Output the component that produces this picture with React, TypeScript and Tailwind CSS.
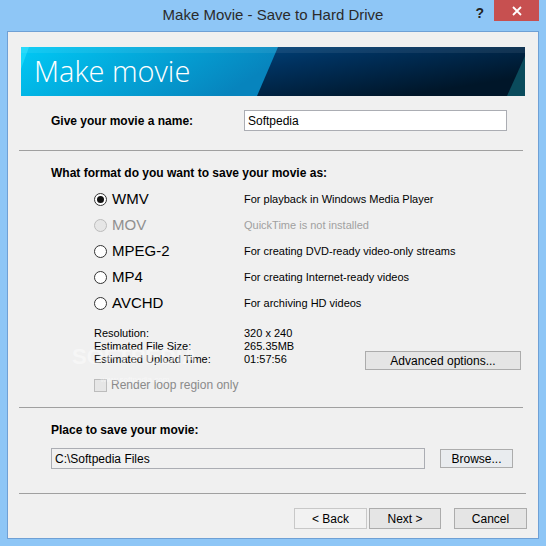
import clsx from "clsx";

const formats = [
  { name: "WMV", desc: "For playback in Windows Media Player", checked: true },
  { name: "MOV", desc: "QuickTime is not installed", disabled: true },
  { name: "MPEG-2", desc: "For creating DVD-ready video-only streams" },
  { name: "MP4", desc: "For creating Internet-ready videos" },
  { name: "AVCHD", desc: "For archiving HD videos" },
];

const info = [
  ["Resolution:", "320 x 240"],
  ["Estimated File Size:", "265.35MB"],
  ["Estimated Upload Time:", "01:57:56"],
];

function Radio({ checked, disabled }: { checked?: boolean; disabled?: boolean }) {
  return (
    <span
      className={clsx(
        "flex h-[13px] w-[13px] shrink-0 items-center justify-center rounded-full border",
        disabled ? "border-[#bcbcbc] bg-[#e6e6e6]" : "border-[#333333] bg-white"
      )}
    >
      {checked && <span className="h-[7px] w-[7px] rounded-full bg-[#111]" />}
    </span>
  );
}

function Button({ children, className }: { children: React.ReactNode; className?: string }) {
  return (
    <div
      className={clsx(
        "flex items-center justify-center border border-[#acacac] bg-[#e5e5e5] text-[12px] text-black",
        className
      )}
    >
      {children}
    </div>
  );
}

function Separator({ className }: { className?: string }) {
  return <div className={clsx("ml-[11px] h-px bg-[#a0a0a0]", className)} />;
}

function Banner() {
  return (
    <div className="ml-[13px] mt-[15px] grid h-[49px] w-[504px]">
      <svg className="[grid-area:1/1]" width="504" height="49" viewBox="0 0 504 49">
        <defs>
          <linearGradient id="lft" x1="0" y1="0" x2="1" y2="0.3">
            <stop offset="0" stopColor="#00c9f5" />
            <stop offset="1" stopColor="#0784bd" />
          </linearGradient>
          <linearGradient id="rgt" x1="0" y1="0" x2="1" y2="0.6">
            <stop offset="0" stopColor="#005ca2" />
            <stop offset="0.55" stopColor="#00315e" />
            <stop offset="1" stopColor="#001629" />
          </linearGradient>
        </defs>
        <rect width="504" height="49" fill="url(#rgt)" />
        <polygon points="0,0 257,0 236,49 0,49" fill="url(#lft)" />
        <polygon points="0,0 8,0 0,22" fill="#29e3ff" opacity="0.6" />
        <polygon points="504,9 504,49 486,49" fill="#0a4b5c" />
        <rect width="504" height="6" fill="#ffffff" opacity="0.07" />
      </svg>
      <div className="z-10 flex items-center pl-[13px] pb-[2px] font-['Open_Sans',sans-serif] text-[29px] font-light leading-none text-white [grid-area:1/1]">
        Make movie
      </div>
    </div>
  );
}

export default function App() {
  return (
    <div className="flex h-[546px] w-[546px] flex-col bg-[#8ec6f6] font-['Liberation_Sans',Arial,sans-serif]">
      <div className="grid h-[31px] grid-cols-[1fr_auto_1fr]">
        <div />
        <div className="flex items-center pb-[1px] text-[15px] text-[#2b2b2b]">Make Movie - Save to Hard Drive</div>
        <div className="flex items-start justify-end pr-[7px]">
          <span className="mr-[10px] mt-[3px] text-[14px] font-bold text-[#222]">?</span>
          <div className="flex h-[21px] w-[45px] items-center justify-center bg-[#c75050]">
            <svg width="10" height="10" viewBox="0 0 10 10">
              <path d="M1 1 L9 9 M9 1 L1 9" stroke="white" strokeWidth="1.8" />
            </svg>
          </div>
        </div>
      </div>

      <div className="relative mx-[7px] mb-[7px] flex flex-1 flex-col border border-[#6fa0d5] bg-[#f0f0f0] text-[11px] text-black">
        <Banner />

        <div className="mt-[14px] flex h-[21px] items-center pl-[43px]">
          <div className="w-[193px] text-[12px] font-bold">Give your movie a name:</div>
          <div className="flex h-[21px] w-[263px] items-center border border-[#abadb3] bg-white pl-[3px] text-[12px]">
            Softpedia
          </div>
        </div>

        <Separator className="mt-[19px] w-[504px]" />

        <div className="mt-[14px] h-[16px] pl-[43px] text-[12px] font-bold leading-[16px]">
          What format do you want to save your movie as:
        </div>

        <div className="mt-[5px] flex flex-col pl-[86px]">
          {formats.map((f) => (
            <div key={f.name} className="flex h-[26px] items-center">
              <div className="flex w-[150px] items-center gap-[5px]">
                <Radio checked={f.checked} disabled={f.disabled} />
                <span className={clsx("text-[15px]", f.disabled ? "text-[#8f8f8f]" : "text-black")}>{f.name}</span>
              </div>
              <span className={clsx("text-[11px]", f.disabled ? "text-[#a0a0a0]" : "text-black")}>{f.desc}</span>
            </div>
          ))}
        </div>

        <div className="mt-[11px] flex items-start">
          <div className="flex w-[357px] flex-col pl-[86px]">
            {info.map(([k, v]) => (
              <div key={k} className="flex h-[13px] items-center leading-[13px]">
                <span className="w-[150px]">{k}</span>
                <span>{v}</span>
              </div>
            ))}
          </div>
          <Button className="mt-[24px] h-[19px] w-[156px]">Advanced options...</Button>
        </div>

        <div className="mt-[7px] flex h-[16px] items-center gap-[4px] pl-[86px]">
          <span className="h-[13px] w-[13px] border border-[#bcbcbc] bg-[#e6e6e6]" />
          <span className="text-[12px] text-[#8a8a8a]">Render loop region only</span>
        </div>

        <Separator className="mt-[14px] w-[504px]" />

        <div className="mt-[14px] h-[16px] pl-[43px] text-[12px] font-bold leading-[16px]">
          Place to save your movie:
        </div>

        <div className="mt-[10px] flex h-[21px] items-center pl-[43px]">
          <div className="flex h-[21px] w-[374px] items-center border border-[#abadb3] bg-[#f0f0f0] pl-[3px] text-[12px]">
            C:\Softpedia Files
          </div>
          <Button className="ml-[15px] h-[19px] w-[73px] border-[#3d9bf5] bg-[#e9ecef]">Browse...</Button>
        </div>

        <Separator className="mt-[24px] w-[507px]" />

        <div className="mt-[14px] flex justify-end pr-[11px]">
          <Button className="h-[21px] w-[73px] border-[#c8c8c8] bg-[#f2f2f2] text-[#a8a8a8]">&lt; Back</Button>
          <Button className="ml-[2px] h-[21px] w-[72px]">Next &gt;</Button>
          <Button className="ml-[13px] h-[21px] w-[73px]">Cancel</Button>
        </div>

        {/* faint site watermark over the dialog */}
        <div className="pointer-events-none absolute left-[64px] top-[314px] flex flex-col items-center leading-none">
          <span className="text-[22px] font-bold text-white opacity-45">SOFTPEDIA</span>
          <span className="mt-[8px] text-[8px] text-white opacity-50">www.softpedia.com</span>
        </div>
      </div>
    </div>
  );
}
